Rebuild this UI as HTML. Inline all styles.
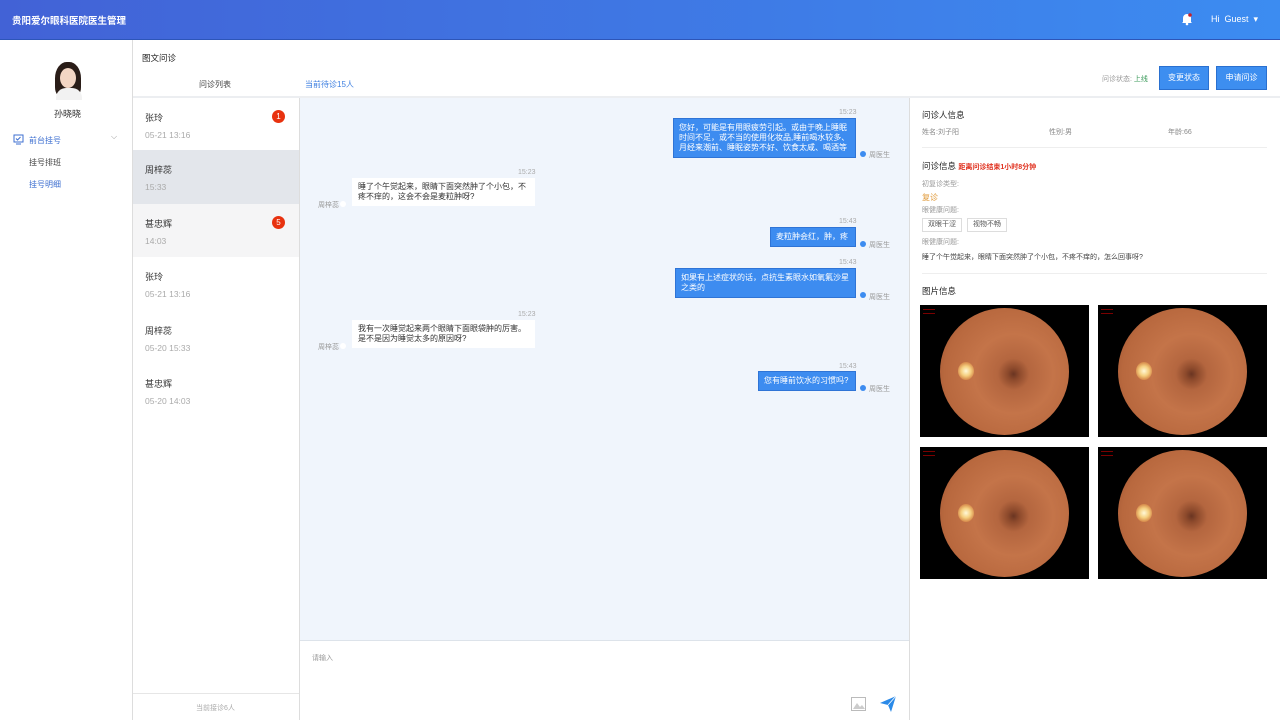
<!DOCTYPE html>
<html><head><meta charset="utf-8"><style>
*{margin:0;padding:0;box-sizing:border-box}
body{width:1280px;height:720px;overflow:hidden;font-family:"Liberation Sans","Noto Sans CJK SC",sans-serif;font-size:8px;color:#333;background:#fff;position:relative}
.a{position:absolute}
.hdr{left:0;top:0;width:1280px;height:40px;background:linear-gradient(90deg,#4262d6,#3c8cf1);border-bottom:1px solid #2d55b8}
.item{position:absolute;left:133px;width:166px;height:53.5px}
.item .n{position:absolute;left:12px;top:13px;font-size:9px;color:#333}
.item .t{position:absolute;left:12px;top:32px;font-size:8.5px;color:#aaa}
.badge{position:absolute;left:139px;top:12px;width:13px;height:13px;border-radius:50%;background:#e8320f;color:#fff;font-size:8px;text-align:center;line-height:13px}
.tm{position:absolute;font-size:7px;color:#aaa}
.bl{position:absolute;background:#3d8cf0;color:#fff;font-size:8px;line-height:10px;padding:4px 5px;border:1px solid #2f74d6}
.bw{position:absolute;background:#fff;color:#333;font-size:8px;line-height:10px;padding:4px 6px}
.dot{position:absolute;width:6px;height:6px;border-radius:50%;background:#3d8cf0}
.dw{position:absolute;width:6px;height:6px;border-radius:50%;background:#fff}
.nm{position:absolute;font-size:7px;color:#999}
.eye{position:absolute;width:169px;height:132px;background:#000;overflow:hidden}
.eye .c{position:absolute;left:20px;top:3px;width:129px;height:127px;border-radius:50%;background:radial-gradient(circle at 57% 52%,#6a3522 0,#8d4a2c 6%,#b4663f 16%,#c47449 40%,#b8683e 70%,#8a4428 100%)}
.eye .d{position:absolute;left:38px;top:57px;width:16px;height:18px;border-radius:50%;background:radial-gradient(circle,#fff8d8 0,#f5d080 40%,#d9904f 70%,rgba(200,110,60,0) 100%)}
.eye .l{position:absolute;left:3px;top:4px;width:12px;height:5px;border-top:1px solid #c00;border-bottom:1px solid #c00;opacity:.6}
</style></head><body>
<div class="a hdr"></div>
<div class="a" style="left:12px;top:13px;font-size:9.5px;color:#fff;font-weight:bold">贵阳爱尔眼科医院医生管理</div>
<svg class="a" style="left:1180px;top:12px" width="14" height="14" viewBox="0 0 14 14"><path d="M3 10V6a4 4 0 0 1 8 0v4l1 1H2z" fill="#fff"/><circle cx="7" cy="12" r="1.3" fill="#fff"/><circle cx="10" cy="3" r="1.8" fill="#c4202a"/></svg>
<div class="a" style="left:1211px;top:14px;font-size:9px;color:#fff">Hi &nbsp;Guest &nbsp;▾</div>

<!-- sidebar -->
<div class="a" style="left:132px;top:40px;width:1px;height:680px;background:#ddd"></div>
<div class="a" style="left:55px;top:62px;width:26px;height:36px;border-radius:45% 45% 30% 30%;background:#2a1d18"></div>
<div class="a" style="left:60px;top:68px;width:16px;height:20px;border-radius:50%;background:#f3d6c4"></div>
<div class="a" style="left:56px;top:88px;width:26px;height:12px;border-radius:10px 10px 0 0;background:#f2f2f2"></div>
<div class="a" style="left:54px;top:107px;font-size:9px;color:#333">孙晓晓</div>
<svg class="a" style="left:13px;top:134px" width="11" height="11" viewBox="0 0 11 11"><rect x="1" y="1" width="9" height="7" fill="none" stroke="#3d6fd0" stroke-width="1"/><path d="M3 4.5l1.5 1.5 3-3" stroke="#3d6fd0" fill="none"/><path d="M3 10h5" stroke="#3d6fd0"/></svg>
<div class="a" style="left:29px;top:135px;font-size:8px;color:#3d6fd0">前台挂号</div>
<div class="a" style="left:111px;top:132px;font-size:8px;color:#999">⌵</div>
<div class="a" style="left:29px;top:157px;font-size:8px;color:#444">挂号排班</div>
<div class="a" style="left:29px;top:179px;font-size:8px;color:#3d6fd0">挂号明细</div>

<!-- top bar -->
<div class="a" style="left:142px;top:52px;font-size:8.5px;color:#222">图文问诊</div>
<div class="a" style="left:199px;top:79px;font-size:8px;color:#444">问诊列表</div>
<div class="a" style="left:305px;top:79px;font-size:8px;color:#3d7fe0">当前待诊15人</div>
<div class="a" style="left:1102px;top:74px;font-size:7px;color:#999">问诊状态: <span style="color:#3a9a5a">上线</span></div>
<div class="a" style="left:1159px;top:66px;width:50px;height:24px;background:#3d8ef0;border:1px solid #2a70d0;color:#fff;font-size:8px;text-align:center;line-height:22px">变更状态</div>
<div class="a" style="left:1216px;top:66px;width:51px;height:24px;background:#3d8ef0;border:1px solid #2a70d0;color:#fff;font-size:8px;text-align:center;line-height:22px">申请问诊</div>
<div class="a" style="left:133px;top:96px;width:1147px;height:2px;background:#eceef1"></div>

<!-- list -->
<div class="a" style="left:299px;top:98px;width:1px;height:622px;background:#ddd"></div>
<div class="item" style="top:98px;border-bottom:1px solid #e6e6e6"><div class="n">张玲</div><div class="t">05-21 13:16</div><div class="badge">1</div></div>
<div class="item" style="top:150px;background:#e3e6eb"><div class="n">周梓蕊</div><div class="t">15:33</div></div>
<div class="item" style="top:203.5px;background:#f5f5f6"><div class="n">甚忠辉</div><div class="t">14:03</div><div class="badge">5</div></div>
<div class="item" style="top:257px"><div class="n">张玲</div><div class="t">05-21 13:16</div></div>
<div class="item" style="top:310.5px"><div class="n">周梓蕊</div><div class="t">05-20 15:33</div></div>
<div class="item" style="top:364px"><div class="n">甚忠辉</div><div class="t">05-20 14:03</div></div>
<div class="a" style="left:133px;top:693px;width:166px;height:1px;background:#e6e6e6"></div>
<div class="a" style="left:196px;top:703px;font-size:7px;color:#aaa">当前接诊6人</div>

<!-- chat -->
<div class="a" style="left:300px;top:98px;width:609px;height:542px;background:#f0f5fc"></div>
<div class="a" style="left:300px;top:640px;width:609px;height:1px;background:#dde3ea"></div>
<div class="a" style="left:909px;top:98px;width:1px;height:622px;background:#ddd"></div>

<div class="tm" style="left:839px;top:109px">15:23</div>
<div class="bl" style="left:673px;top:118px;width:183px">您好，可能是有用眼疲劳引起。或由于晚上睡眠时间不足，或不当的使用化妆品,睡前喝水较多、月经来潮前、睡眠姿势不好、饮食太咸、喝酒等</div>
<div class="dot" style="left:860px;top:151px"></div><div class="nm" style="left:869px;top:150px">周医生</div>

<div class="tm" style="left:518px;top:169px">15:23</div>
<div class="bw" style="left:352px;top:178px;width:183px">睡了个午觉起来，眼睛下面突然肿了个小包，不疼不痒的，这会不会是麦粒肿呀?</div>
<div class="nm" style="left:318px;top:200px">周梓蕊</div><div class="dw" style="left:340px;top:201px"></div>

<div class="tm" style="left:839px;top:218px">15:43</div>
<div class="bl" style="left:770px;top:227px;width:86px">麦粒肿会红，肿，疼</div>
<div class="dot" style="left:860px;top:241px"></div><div class="nm" style="left:869px;top:240px">周医生</div>

<div class="tm" style="left:839px;top:259px">15:43</div>
<div class="bl" style="left:675px;top:268px;width:181px">如果有上述症状的话，点抗生素眼水如氧氟沙星之类的</div>
<div class="dot" style="left:860px;top:292px"></div><div class="nm" style="left:869px;top:292px">周医生</div>

<div class="tm" style="left:518px;top:311px">15:23</div>
<div class="bw" style="left:352px;top:320px;width:183px">我有一次睡觉起来两个眼睛下面眼袋肿的厉害。是不是因为睡觉太多的原因呀?</div>
<div class="nm" style="left:318px;top:342px">周梓蕊</div><div class="dw" style="left:340px;top:343px"></div>

<div class="tm" style="left:839px;top:363px">15:43</div>
<div class="bl" style="left:758px;top:371px;width:98px">您有睡前饮水的习惯吗?</div>
<div class="dot" style="left:860px;top:385px"></div><div class="nm" style="left:869px;top:384px">周医生</div>

<div class="a" style="left:312px;top:653px;font-size:7px;color:#999">请输入</div>
<svg class="a" style="left:851px;top:697px" width="15" height="14" viewBox="0 0 15 14"><rect x=".5" y=".5" width="14" height="13" fill="none" stroke="#bbb"/><path d="M2 12l4-6 3 4 2-2 3 4z" fill="#ccc"/></svg>
<svg class="a" style="left:879px;top:695px" width="18" height="18" viewBox="0 0 18 18"><path d="M1 8L17 1 12 17 9 10z" fill="#2b8ae8"/><path d="M9 10L17 1" stroke="#fff" stroke-width=".8"/></svg>

<!-- right panel -->
<div class="a" style="left:922px;top:109px;font-size:8.5px;color:#222">问诊人信息</div>
<div class="a" style="left:922px;top:127px;font-size:7px;color:#888">姓名:刘子阳</div>
<div class="a" style="left:1049px;top:127px;font-size:7px;color:#888">性别:男</div>
<div class="a" style="left:1168px;top:127px;font-size:7px;color:#888">年龄:66</div>
<div class="a" style="left:922px;top:147px;width:345px;height:1px;background:#eee"></div>
<div class="a" style="left:922px;top:160px;font-size:8.5px;color:#222">问诊信息 <span style="font-size:7px;color:#e0301e;font-weight:bold">距离问诊结束1小时8分钟</span></div>
<div class="a" style="left:922px;top:179px;font-size:7px;color:#999">初复诊类型:</div>
<div class="a" style="left:922px;top:192px;font-size:8px;color:#e09a3a">复诊</div>
<div class="a" style="left:922px;top:205px;font-size:7px;color:#999">眼健康问题:</div>
<div class="a" style="left:922px;top:218px;width:40px;height:14px;border:1px solid #ddd;font-size:7px;color:#555;text-align:center;line-height:12px">双眼干涩</div>
<div class="a" style="left:967px;top:218px;width:40px;height:14px;border:1px solid #ddd;font-size:7px;color:#555;text-align:center;line-height:12px">视物不畅</div>
<div class="a" style="left:922px;top:237px;font-size:7px;color:#999">眼健康问题:</div>
<div class="a" style="left:922px;top:252px;font-size:7px;color:#444">睡了个午觉起来，眼睛下面突然肿了个小包，不疼不痒的，怎么回事呀?</div>
<div class="a" style="left:922px;top:273px;width:345px;height:1px;background:#eee"></div>
<div class="a" style="left:922px;top:285px;font-size:8.5px;color:#222">图片信息</div>
<div class="eye" style="left:920px;top:305px"><div class="c"></div><div class="d"></div><div class="l"></div></div>
<div class="eye" style="left:1098px;top:305px"><div class="c"></div><div class="d"></div><div class="l"></div></div>
<div class="eye" style="left:920px;top:447px"><div class="c"></div><div class="d"></div><div class="l"></div></div>
<div class="eye" style="left:1098px;top:447px"><div class="c"></div><div class="d"></div><div class="l"></div></div>
</body></html>
